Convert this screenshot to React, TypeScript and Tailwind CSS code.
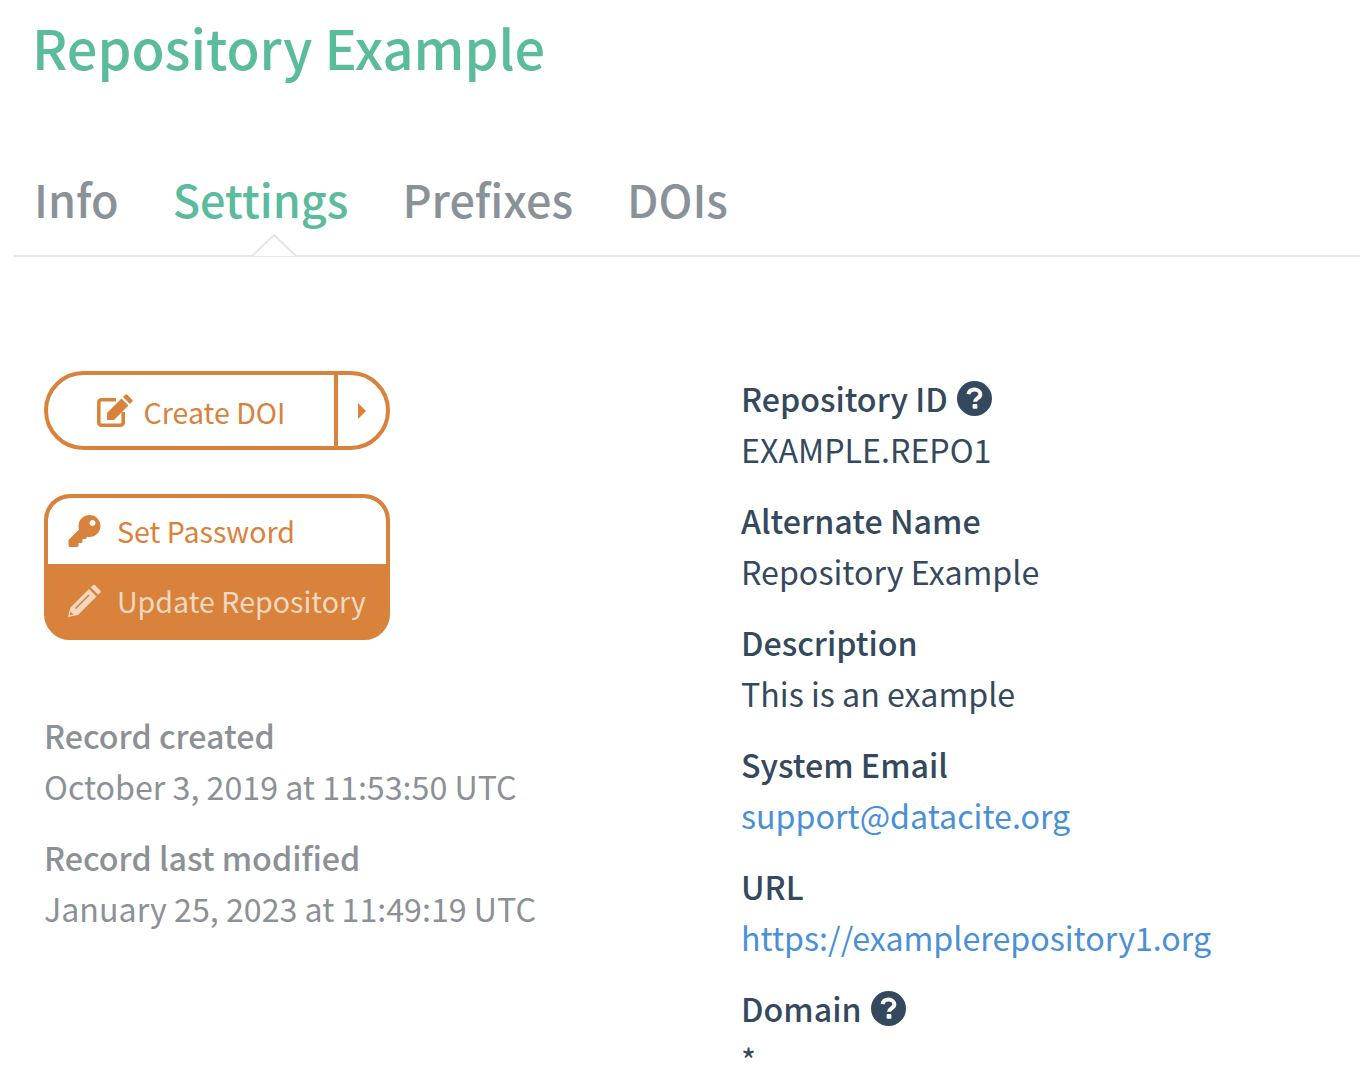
import React from "react";
import { FaKey } from "react-icons/fa";

const font = "[font-family:'Noto_Sans_CJK_JP','Open_Sans',sans-serif]";

function Help() {
  return (
    <svg className="ml-[9px] shrink-0" width="35" height="35" viewBox="0 0 35 35">
      <circle cx="17.5" cy="17.5" r="17.5" fill="#34495e" />
      <path d="M11.5 13.2c.6-3 3-4.6 6-4.6 3.2 0 5.8 2 5.8 4.8 0 4-5.3 4-5.3 7.4" fill="none" stroke="#fff" strokeWidth="4" />
      <rect x="15.6" y="23" width="4.8" height="4.8" rx="1" fill="#fff" />
    </svg>
  );
}

function EditIcon() {
  return (
    <svg width="37" height="33" viewBox="0 0 37 33" fill="currentColor">
      <path d="M19 5.8H4.5a2.7 2.7 0 0 0-2.7 2.7v20a2.7 2.7 0 0 0 2.7 2.7h19a2.7 2.7 0 0 0 2.7-2.7V18" fill="none" stroke="currentColor" strokeWidth="3.6" />
      <path d="M10 26v-7L24.5 4.5l7 7L17 26z" />
      <path d="M26 3l2.2-2.2a1.5 1.5 0 0 1 2.1 0l4.9 4.9a1.5 1.5 0 0 1 0 2.1L33 10z" />
    </svg>
  );
}

function PencilIcon() {
  return (
    <svg width="34" height="34" viewBox="0 0 34 34" fill="currentColor">
      <path d="M1 33l2.4-9.5L22 5l7.5 7.5L11 31z" />
      <path d="M23.7 3.3L25.5 1.5a2 2 0 0 1 2.8 0l4.7 4.7a2 2 0 0 1 0 2.8l-1.8 1.8z" />
      <path d="M8.5 24.5L22 11" stroke="#d9823b" strokeWidth="1.6" fill="none" />
      <path d="M3.6 27.5l2.9 2.9-3.6.9z" fill="#d9823b" />
    </svg>
  );
}

function Field({ label, help, last, children }: { label: string; help?: boolean; last?: boolean; children: React.ReactNode }) {
  return (
    <div className="mb-[20px] text-[#34495e]">
      <div className="flex items-center h-[51px] pb-[1px] font-medium whitespace-nowrap">
        <span>{label}</span>
        {help && <Help />}
      </div>
      <div className={last ? "h-[45px] pt-[5px] leading-[40px]" : "h-[51px] leading-[51px] whitespace-nowrap"}>{children}</div>
    </div>
  );
}

function Stamp({ label, value }: { label: string; value: string }) {
  return (
    <div className="mb-[20px] text-[#8b9196] whitespace-nowrap">
      <div className="h-[51px] leading-[51px] font-medium">{label}</div>
      <div className="h-[51px] leading-[51px]">{value}</div>
    </div>
  );
}

export default function App() {
  return (
    <div className={`${font} w-[1360px] h-[1066px] overflow-hidden bg-white pl-[14px] text-[32.2px]`}>
      <h1 className="pl-[18px] pt-[13px] h-[120px] text-[54px] leading-[68px] font-medium text-[#5bbb9d]">Repository Example</h1>
      <div className="relative flex h-[137px] pt-[47px] gap-[54px] pl-[20px] border-b-2 border-[#e4e6e8] text-[45px] leading-[64px] font-medium text-[#8a9299]">
        <span>Info</span>
        <span className="text-[#5bbb9d]">Settings</span>
        <span>Prefixes</span>
        <span>DOIs</span>
        <svg className="absolute left-[238px] bottom-[-2px]" width="44" height="23" viewBox="0 0 44 23">
          <path d="M0 22 L22 1 L44 22" fill="#fff" stroke="#e4e6e8" strokeWidth="2" />
        </svg>
      </div>
      <div className="flex pt-[114px]">
        <div className="w-[697px] pl-[30px] shrink-0">
          <div className="flex w-[346px] h-[79px] rounded-[40px] border-4 border-[#d9823b] text-[#d9823b] text-[28.6px]">
            <div className="flex items-center justify-center gap-[10px] w-[290px] border-r-4 border-[#d9823b] whitespace-nowrap">
              <EditIcon />
              <span className="pt-[3px]">Create DOI</span>
            </div>
            <div className="flex flex-1 items-center justify-center">
              <svg width="8" height="16" viewBox="0 0 8 16" fill="currentColor"><path d="M0 0l8 8-8 8z" /></svg>
            </div>
          </div>
          <div className="mt-[44px] w-[346px] rounded-[26px] border-4 border-[#d9823b] bg-[#d9823b] overflow-hidden text-[28.6px] whitespace-nowrap">
            <div className="flex items-center h-[66px] pl-[20px] gap-[16px] bg-white rounded-t-[22px] text-[#d9823b]">
              <FaKey className="w-[33px] h-[32px]" />
              <span>Set Password</span>
            </div>
            <div className="flex items-center h-[72px] pl-[19px] pt-[2px] gap-[16px] text-[#f3d8c1]">
              <PencilIcon />
              <span>Update Repository</span>
            </div>
          </div>
          <div className="mt-[70px]">
            <Stamp label="Record created" value="October 3, 2019 at 11:53:50 UTC" />
            <Stamp label="Record last modified" value="January 25, 2023 at 11:49:19 UTC" />
          </div>
        </div>
        <div className="flex-1 pl-[30px] mt-[2px]">
          <Field label="Repository ID" help>EXAMPLE.REPO1</Field>
          <Field label="Alternate Name">Repository Example</Field>
          <Field label="Description">This is an example</Field>
          <Field label="System Email"><span className="text-[#4a90d6]">support@datacite.org</span></Field>
          <Field label="URL"><span className="text-[#4a90d6]">https://examplerepository1.org</span></Field>
          <Field label="Domain" help last>*</Field>
        </div>
      </div>
    </div>
  );
}
